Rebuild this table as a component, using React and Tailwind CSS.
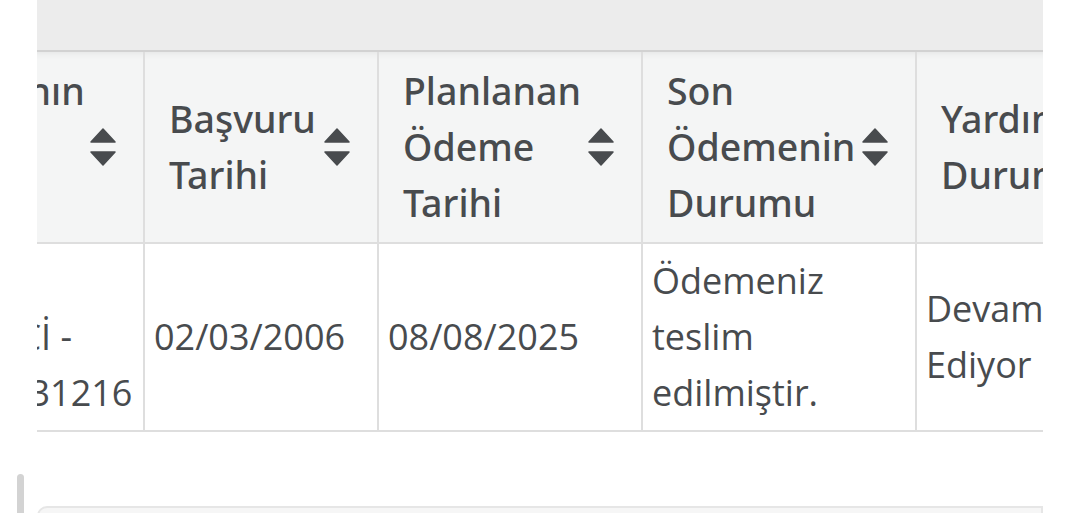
import React from 'react'

function SortIcon() {
  return (
    <svg
      className="absolute right-[27px] top-1/2 -translate-y-1/2"
      width="26"
      height="38"
      viewBox="0 0 26 38"
    >
      <path d="M1 14 L13 1 L25 14 Z" fill="#484b4e" stroke="#484b4e" strokeWidth="1.5" strokeLinejoin="round" />
      <path d="M1 24 L25 24 L13 37 Z" fill="#484b4e" stroke="#484b4e" strokeWidth="1.5" strokeLinejoin="round" />
    </svg>
  )
}

function HeadCell({ lines, width }) {
  return (
    <th
      className={`relative ${width} border-r-2 border-[#dedede] pl-[24px] pr-[60px] py-[11px] text-left align-middle font-['Noto_Sans',sans-serif] text-[37.5px] font-medium`}
    >
      {lines.map((l, i) => (
        <div key={i} className="whitespace-nowrap">{l}</div>
      ))}
      <SortIcon />
    </th>
  )
}

function BodyCell({ lines }) {
  return (
    <td className="border-r-2 border-[#dedede] pl-[9px] pr-[10px] py-[9px] align-middle">
      {lines.map((l, i) => (
        <div key={i} className="whitespace-nowrap">{l}</div>
      ))}
    </td>
  )
}

export default function App() {
  return (
    <div className="relative w-[1065px] h-[513px] overflow-hidden bg-white font-['Open_Sans',sans-serif] text-[36px] leading-[56px] text-[#484b4e]">
      <div className="ml-[37px] w-[1006px]">
        {/* barre grise au dessus du tableau */}
        <div className="h-[50px] bg-[#ececec]" />

        {/* tableau défilé horizontalement */}
        <div className="overflow-hidden border-t-2 border-[#d2d2d2]">
          <table className="table-fixed border-collapse -ml-[313px] w-[1500px]">
            <thead className="bg-[#f4f5f5] shadow-[inset_0_6px_6px_-4px_rgba(0,0,0,0.06)]">
              <tr className="border-b-2 border-[#dedede]">
                <HeadCell width="w-[420px]" lines={['Burs Yararlanıcının', 'Adı Soyadı', 'Bilgileri']} />
                <HeadCell width="w-[234px]" lines={['Başvuru', 'Tarihi']} />
                <HeadCell width="w-[264px]" lines={['Planlanan', 'Ödeme', 'Tarihi']} />
                <HeadCell width="w-[274px]" lines={['Son', 'Ödemenin', 'Durumu']} />
                <th className="border-r-2 border-[#dedede] pl-[24px] pr-[60px] py-[11px] text-left align-middle font-['Noto_Sans',sans-serif] text-[37.5px] font-medium">
                  <div className="whitespace-nowrap">Yardım</div>
                  <div className="whitespace-nowrap">Durumu</div>
                </th>
              </tr>
            </thead>
            <tbody>
              <tr className="border-b-2 border-[#dedede]">
                <BodyCell lines={['Burs Programı', 'Lisans Ek ÖĞRENCİ -', 'Başvuru No: 025031216']} />
                <BodyCell lines={['02/03/2006']} />
                <BodyCell lines={['08/08/2025']} />
                <BodyCell lines={['Ödemeniz', 'teslim', 'edilmiştir.']} />
                <BodyCell lines={['Devam', 'Ediyor']} />
              </tr>
            </tbody>
          </table>
        </div>
      </div>

      {/* indicateur de défilement */}
      <div className="absolute left-[17px] top-[474px] w-[7px] h-[50px] rounded-full bg-[#d3d3d3]" />

      {/* boîte suivante, coupée en bas */}
      <div className="mt-[74px] ml-[37px] w-[1006px] h-[40px] rounded-tl-[10px] border-2 border-[#e6e6e6] bg-[#f6f6f6]" />
    </div>
  )
}
